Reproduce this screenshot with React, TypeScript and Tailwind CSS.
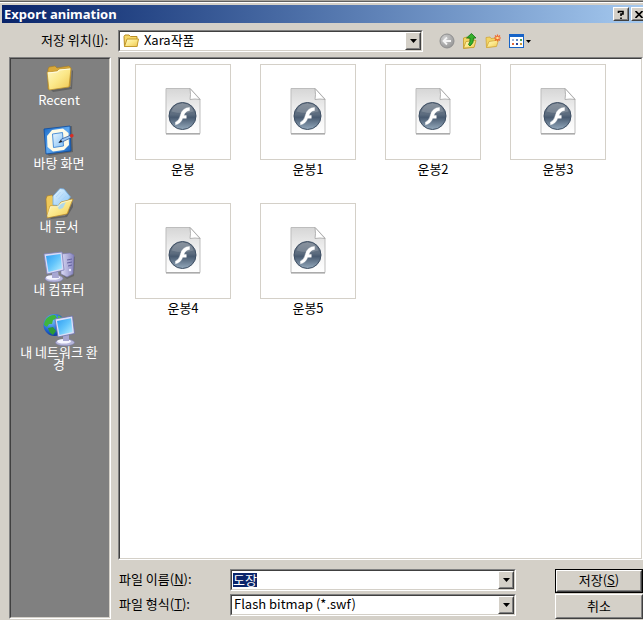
import { useEffect, useRef } from "react";
import type { ReactNode } from "react";

const files = ["운봉", "운봉1", "운봉2", "운봉3", "운봉4", "운봉5"];

const sunken = "border border-t-[#808080] border-l-[#808080] border-b-white border-r-white";
const sunkenInner = "border border-t-[#404040] border-l-[#404040] border-b-[#d4d0c8] border-r-[#d4d0c8]";
const raised = "border border-t-white border-l-white border-b-[#404040] border-r-[#404040]";
const raisedInner = "border border-t-[#d4d0c8] border-l-[#d4d0c8] border-b-[#808080] border-r-[#808080]";

function Gradients() {
    return (
        <svg className="absolute h-0 w-0" aria-hidden="true">
            <defs>
                <linearGradient id="folder" x1="0" y1="0" x2="1" y2="1">
                    <stop offset="0" stopColor="#fff9c8" />
                    <stop offset="0.5" stopColor="#fbe88a" />
                    <stop offset="1" stopColor="#efc550" />
                </linearGradient>
                <linearGradient id="paper" x1="0" y1="0" x2="0" y2="1">
                    <stop offset="0" stopColor="#d6d6d6" />
                    <stop offset="0.5" stopColor="#f1f1f1" />
                    <stop offset="1" stopColor="#ffffff" />
                </linearGradient>
                <linearGradient id="ball" x1="0" y1="0" x2="0" y2="1">
                    <stop offset="0" stopColor="#76818e" />
                    <stop offset="0.45" stopColor="#5b6b7e" />
                    <stop offset="0.55" stopColor="#485a70" />
                    <stop offset="1" stopColor="#94a9bc" />
                </linearGradient>
                <linearGradient id="screen" x1="0" y1="0" x2="1" y2="1">
                    <stop offset="0" stopColor="#2f9df2" />
                    <stop offset="0.5" stopColor="#62c4fb" />
                    <stop offset="1" stopColor="#b9f0ff" />
                </linearGradient>
                <linearGradient id="case" x1="0" y1="0" x2="1" y2="0">
                    <stop offset="0" stopColor="#dcdcf6" />
                    <stop offset="1" stopColor="#8583bd" />
                </linearGradient>
                <linearGradient id="desk" x1="0" y1="0" x2="1" y2="1">
                    <stop offset="0" stopColor="#1767c4" />
                    <stop offset="0.5" stopColor="#5fa8f0" />
                    <stop offset="1" stopColor="#1561bd" />
                </linearGradient>
                <linearGradient id="sheet" x1="0" y1="0" x2="1" y2="1">
                    <stop offset="0" stopColor="#e8f6ff" />
                    <stop offset="1" stopColor="#86c2f5" />
                </linearGradient>
                <radialGradient id="globe" cx="0.35" cy="0.3" r="0.8">
                    <stop offset="0" stopColor="#7cc4ff" />
                    <stop offset="0.6" stopColor="#1f63d0" />
                    <stop offset="1" stopColor="#0b2f86" />
                </radialGradient>
                <radialGradient id="back" cx="0.35" cy="0.3" r="0.8">
                    <stop offset="0" stopColor="#cfcfcf" />
                    <stop offset="1" stopColor="#929292" />
                </radialGradient>
            </defs>
        </svg>
    );
}

function RecentIcon() {
    return (
        <svg viewBox="0 0 32 32" className="h-8 w-8">
            <path d="M8 28 28 25 29 8 30 9 29 27 10 30z" fill="#444" opacity="0.5" />
            <path d="M5 7 6 5 12 4 14 6 26 4 28 6 27 24 5 27z" fill="#d9a93a" stroke="#a87c1e" strokeWidth="0.6" />
            <path d="M4 10 14 9 16 7 28 6 26 25 6 28z" fill="url(#folder)" stroke="#b98c28" strokeWidth="0.7" />
            <path d="M5 11 14.500 10 16.500 8 27 7" fill="none" stroke="#fffbe0" />
        </svg>
    );
}

function DesktopIcon() {
    return (
        <svg viewBox="0 0 32 32" className="h-8 w-8">
            <path d="M4 4 29 1 30 27 6 31 3 28z" fill="#444" opacity="0.5" />
            <path d="M1 4 27 1 28 26 3 29z" fill="url(#desk)" stroke="#0b4ba0" strokeWidth="0.8" />
            <path d="M9 5 20 3.500 25.500 8 26 20 21 25 10 26.500 4.500 22 4 11z" fill="#fdfbe8" />
            <path d="M9.500 9 19.500 7.500 20.500 21 10.500 22.500z" fill="url(#sheet)" stroke="#3d86d2" strokeWidth="0.9" />
            <path d="M16 17.500 18.500 14 27 10.500 28.500 12.500 19.500 16.800z" fill="#9cc6f2" stroke="#1f4f93" strokeWidth="0.7" />
            <path d="M15.500 18 18 14.800 19.200 16.800z" fill="#222" />
            <path d="M26.500 10 29 8.800Q31.200 9.500 30.500 11.500L28 13z" fill="#d92c22" />
        </svg>
    );
}

function DocumentsIcon() {
    return (
        <svg viewBox="0 0 32 32" className="h-8 w-8">
            <path d="M6 29 22 28 30 14 30 19 24 29 8 31z" fill="#444" opacity="0.5" />
            <path d="M3 11 4 8 9 7 11 10 27 9 25 25 4 28z" fill="#eec85a" stroke="#a97b20" strokeWidth="0.6" />
            <path d="M10 8 17 0.500 21 1 27.500 9 20 18 10 17z" fill="url(#sheet)" stroke="#6ea9df" strokeWidth="0.8" />
            <path d="M13 9 17.500 4 M15.500 11 20.500 5.500 M18 13 23 8" stroke="#a9d2f6" strokeWidth="0.8" />
            <path d="M4 30 7 18 15 18 18 14 30 11 24 26z" fill="url(#folder)" stroke="#b98824" strokeWidth="0.7" />
            <path d="M14 17.500 23 14 20 20 16 21.500z" fill="#a8d6f3" opacity="0.9" />
            <path d="M4.500 28.500 7.500 18.700 15.300 18.700 18.300 14.800 29 12" fill="none" stroke="#fff9d0" strokeWidth="0.8" />
        </svg>
    );
}

function ComputerIcon() {
    return (
        <svg viewBox="0 0 32 32" className="h-8 w-8">
            <path d="M19 4 28 3 32 6 31 25 24 28 19 24z" fill="#444" opacity="0.4" />
            <path d="M18 3 27 2 31 4 30 23 24 26 18 23z" fill="url(#case)" stroke="#7775ae" strokeWidth="0.6" />
            <path d="M24 5 24 25" stroke="#b8b7df" strokeWidth="0.8" />
            <path d="M24 9 29 8 M24 12 29 11 M25 15 29 14" stroke="#5c5a98" strokeWidth="0.9" />
            <circle cx="27" cy="19" r="1.200" fill="#e6e6ff" />
            <ellipse cx="11" cy="27.500" rx="9" ry="3.500" fill="#b9b9df" stroke="#8584b4" strokeWidth="0.6" />
            <ellipse cx="10" cy="26.500" rx="7" ry="2.300" fill="#f4f4ff" />
            <path d="M9 20 15 20 16 27 9 27z" fill="#a8a7d2" />
            <path d="M1 3 19 1 21 19 4 23z" fill="#d8dbf6" stroke="#7d80b8" strokeWidth="0.8" />
            <path d="M3 5 17.500 3 19 17.500 5.500 21z" fill="url(#screen)" />
        </svg>
    );
}

function NetworkIcon() {
    return (
        <svg viewBox="0 0 32 32" className="h-8 w-8">
            <circle cx="11.500" cy="11" r="11" fill="url(#globe)" />
            <path d="M3 5Q7 0.500 12 1L14 4 10 6 9 10 6 10 4 13 1 11Q1 8 3 5z" fill="#3fb53c" />
            <path d="M5 14 10 13 13 17 10 21Q6 19 5 14z" fill="#2c9a35" />
            <path d="M15 1.500Q20 3 21.500 7L17 8 15 5z" fill="#55c144" />
            <ellipse cx="22" cy="28.500" rx="9.500" ry="3.300" fill="#b6b6da" stroke="#8281b2" strokeWidth="0.6" />
            <ellipse cx="21" cy="27.300" rx="7" ry="2.300" fill="#f6f6ff" />
            <path d="M20 20 26 20 26 27 20 27z" fill="#a7a6d0" />
            <path d="M12 5 29.500 2 31.500 19.500 15 23z" fill="#dce0f8" stroke="#6c70ab" strokeWidth="0.8" />
            <path d="M14 7 28 4.300 29.500 18 16.500 21z" fill="url(#screen)" />
        </svg>
    );
}

function SmallFolderIcon() {
    return (
        <svg viewBox="0 0 16 16" className="h-4 w-4 shrink-0">
            <path d="M1 3.500 2 2 6 2 7.500 3.500 14 3.500 14 13.500 1.500 13.500z" fill="#f7d767" stroke="#b88c24" />
            <path d="M1.500 13.500 4 6 15.500 6 14 13.500z" fill="url(#folder)" stroke="#c39a2e" />
        </svg>
    );
}

function BackIcon() {
    return (
        <svg viewBox="0 0 16 16" className="h-4 w-4">
            <circle cx="8" cy="8" r="7" fill="url(#back)" stroke="#8f8f8f" />
            <path d="M12 8H5 M8 4.500 4.500 8 8 11.500" fill="none" stroke="#f4f4f4" strokeWidth="1.800" />
        </svg>
    );
}

function UpIcon() {
    return (
        <svg viewBox="0 0 16 16" className="h-4 w-4">
            <path d="M1.500 5 5 4 6 5.500 12 5 12 14 1.500 15.500z" fill="#f3d563" stroke="#c39a2a" strokeWidth="0.8" />
            <path d="M1.500 15 4 8.500 14 7.500 12 14.500z" fill="url(#folder)" stroke="#c39a2a" strokeWidth="0.8" />
            <path d="M4.500 5 9.500 0.500 14 5 11.500 5Q12 10 8 13L6.500 11.500Q8.500 9 8 5z" fill="#35b02c" stroke="#137216" strokeWidth="0.8" />
        </svg>
    );
}

function NewFolderIcon() {
    return (
        <svg viewBox="0 0 16 16" className="h-4 w-4">
            <path d="M1 4.500 5 4 6 5.500 11 5 11 13 1.500 14.500z" fill="#f3d563" stroke="#d0a63a" strokeWidth="0.8" />
            <path d="M1.500 14.500 4 8.500 13.500 7 11.500 13.500z" fill="url(#folder)" stroke="#d0a63a" strokeWidth="0.8" />
            <path d="M12.500 1.500V8.500 M9 5H16 M10 2.500 15 7.500 M15 2.500 10 7.500" stroke="#f0662a" strokeWidth="1.200" />
            <circle cx="12.500" cy="5" r="1.300" fill="#ffe08a" />
        </svg>
    );
}

function ViewIcon() {
    return (
        <svg viewBox="0 0 24 16" className="h-4 w-6">
            <rect x="1.500" y="1.500" width="14" height="13" fill="#fff" stroke="#1663c7" />
            <rect x="1" y="1" width="15" height="3" fill="#1663c7" />
            <path d="M4 6h2v2h-2z" fill="#9fb4d8" />
            <path d="M8 6h2v2h-2z" fill="#5f87c0" />
            <path d="M12 6h2v2h-2z" fill="#4d9c55" />
            <path d="M4 10h2v2h-2z" fill="#e2693a" />
            <path d="M8 10h2v2h-2z" fill="#27459c" />
            <path d="M12 10h2v2h-2z" fill="#c9973a" />
            <path d="M18 7h5l-2.500 3z" fill="#000" />
        </svg>
    );
}

function FlashFileIcon() {
    return (
        <svg viewBox="0 0 36 48" className="h-12 w-9">
            <path d="M1 1.500H25L35 12V46.500H1z" fill="url(#paper)" stroke="#bdbdbd" />
            <path d="M1 47H35" stroke="#989898" />
            <path d="M25 1.500Q26 8 25 12.500Q30 11.500 35 12.500z" fill="#fff" stroke="#a3a3a3" strokeWidth="0.8" />
            <circle cx="17.500" cy="29" r="13.500" fill="url(#ball)" stroke="#3c4d62" />
            <path d="M6.500 24.500Q8.500 17 17.500 16.500Q26.500 17 28.500 24.500Q17.500 27.500 6.500 24.500z" fill="#fff" opacity="0.15" />
            <path d="M24.500 20.500Q17.500 20.500 15.500 28Q14 34 10.500 35V37.800Q15.500 37 17.800 31.300H21.300V28.500H18.800Q20.500 23.800 24.500 23.500z" fill="#fff" stroke="#fff" strokeWidth="0.4" />
        </svg>
    );
}

function DropArrow() {
    return (
        <span className={`pointer-events-none flex w-4 shrink-0 bg-[#d4d0c8] ${raised}`}>
            <span className={`flex flex-1 items-center justify-center ${raisedInner}`}>
                <svg viewBox="0 0 7 4" className="h-1 w-[7px]">
                    <path d="M0 0H7L3.500 4z" fill="#000" />
                </svg>
            </span>
        </span>
    );
}

function Combo({ children, className }: { children: ReactNode; className: string }) {
    return (
        <div className={`${sunken} ${className}`}>
            <div className={`flex h-full bg-white ${sunkenInner}`}>
                {children}
                <DropArrow />
            </div>
        </div>
    );
}

function Place({ icon, label }: { icon: ReactNode; label: string }) {
    return (
        <button type="button" className="flex w-full flex-col items-center pr-[10px] pl-2 leading-3 text-white">
            {icon}
            <span>{label}</span>
        </button>
    );
}

function TitleButton({ label, children }: { label: string; children: ReactNode }) {
    return (
        <button type="button" aria-label={label} className={`h-[14px] w-4 shrink-0 bg-[#d4d0c8] ${raised}`}>
            <span className={`flex h-full items-center justify-center ${raisedInner}`}>{children}</span>
        </button>
    );
}

function App() {
    const nameRef = useRef<HTMLInputElement>(null);

    useEffect(() => {
        nameRef.current?.focus();
        nameRef.current?.select();
    }, []);

    return (
        <div className="flex min-h-screen flex-col overflow-hidden bg-[#d4d0c8] font-['Noto_Sans_CJK_KR',sans-serif] text-[13px] leading-4 text-black">
            <Gradients />
            <div className="h-[2px] border-b border-[#606060] bg-[#a8a49c]" />
            <div className="h-[3px] border-t border-white" />
            <header className="-mr-1 ml-[2px] flex h-[18px] items-center bg-linear-to-r from-[#0a246a] to-[#a6caf0] pl-[2px]">
                <h1 className="flex-1 pb-px font-['Noto_Sans',sans-serif] text-[13px] font-bold text-white">Export animation</h1>
                <div className="flex gap-[2px]">
                    <TitleButton label="도움말">
                        <svg viewBox="0 0 8 9" className="h-[9px] w-2">
                            <path d="M1.500 3V1.500H6V4H4V6 M4 7.500V9" fill="none" stroke="#000" strokeWidth="1.600" />
                        </svg>
                    </TitleButton>
                    <TitleButton label="닫기">
                        <svg viewBox="0 0 8 7" className="h-[7px] w-2">
                            <path d="M0.500 0 7.500 7 M7.500 0 0.500 7" stroke="#000" strokeWidth="1.700" />
                        </svg>
                    </TitleButton>
                </div>
            </header>

            <div className="flex items-center pt-[7px] pb-[5px]">
                <label htmlFor="place" className="w-[118px] shrink-0 pr-[10px] pb-[2px] text-right">
                    저장 위치(<u>I</u>):
                </label>
                <Combo className="h-[22px] w-[305px]">
                    <span className="flex items-center pl-[3px]">
                        <SmallFolderIcon />
                    </span>
                    <select id="place" className="min-w-0 flex-1 appearance-none bg-transparent pb-[2px] pl-[5px] outline-none">
                        <option>Xara작품</option>
                    </select>
                </Combo>
                <div className="flex gap-[7px] pb-px pl-4">
                    <button type="button" aria-label="뒤로"><BackIcon /></button>
                    <button type="button" aria-label="상위 폴더"><UpIcon /></button>
                    <button type="button" aria-label="새 폴더"><NewFolderIcon /></button>
                    <button type="button" aria-label="보기"><ViewIcon /></button>
                </div>
            </div>

            <div className="flex flex-1 pb-px">
                <nav className={`ml-[9px] w-[102px] shrink-0 ${sunken}`}>
                    <div className={`flex h-full flex-col gap-[19px] bg-[#808080] pt-[3px] ${sunkenInner}`}>
                        <Place icon={<RecentIcon />} label="Recent" />
                        <Place icon={<DesktopIcon />} label="바탕 화면" />
                        <Place icon={<DocumentsIcon />} label="내 문서" />
                        <Place icon={<ComputerIcon />} label="내 컴퓨터" />
                        <Place icon={<NetworkIcon />} label="내 네트워크 환경" />
                    </div>
                </nav>

                <main className="ml-[7px] flex flex-1 flex-col">
                    <div className={`flex flex-1 ${sunken}`}>
                        <ul className={`flex flex-1 flex-wrap content-start gap-x-[29px] gap-y-[26px] bg-white pt-[5px] pl-[15px] ${sunkenInner}`}>
                            {files.map((name) => (
                                <li key={name} className="w-24 text-center">
                                    <div className="flex h-24 items-center justify-center border border-[#d4d0c8] pb-[2px]">
                                        <FlashFileIcon />
                                    </div>
                                    <p className="pt-px">{name}</p>
                                </li>
                            ))}
                        </ul>
                    </div>

                    <form className="flex justify-between pt-[9px]" onSubmit={(e) => e.preventDefault()}>
                        <div className="flex flex-col gap-[3px]">
                            <div className="flex items-center">
                                <label htmlFor="filename" className="w-28 pb-[2px] pl-px">파일 이름(<u>N</u>):</label>
                                <Combo className="h-[22px] w-[286px]">
                                    <input
                                        id="filename"
                                        ref={nameRef}
                                        defaultValue="도장"
                                        className="my-[2px] h-[14px] min-w-0 flex-1 bg-transparent pl-px leading-[14px] outline-none selection:bg-[#0a246a] selection:text-white"
                                    />
                                </Combo>
                            </div>
                            <div className="flex items-center">
                                <label htmlFor="filetype" className="w-28 pb-[2px] pl-px">파일 형식(<u>T</u>):</label>
                                <Combo className="h-[22px] w-[286px]">
                                    <select id="filetype" className="min-w-0 flex-1 appearance-none bg-transparent pb-[2px] pl-[2px] outline-none">
                                        <option>Flash bitmap (*.swf)</option>
                                    </select>
                                </Combo>
                            </div>
                        </div>
                        <div className="flex w-[88px] flex-col gap-px">
                            <button type="submit" className="h-6 border border-black">
                                <span className={`flex h-full ${raised}`}>
                                    <span className={`flex flex-1 items-center justify-center pb-[2px] ${raisedInner}`}>
                                        <span>저장(<u>S</u>)</span>
                                    </span>
                                </span>
                            </button>
                            <button type="button" className={`h-[25px] ${raised}`}>
                                <span className={`flex h-full items-center justify-center pb-[2px] ${raisedInner}`}>취소</span>
                            </button>
                        </div>
                    </form>
                </main>
            </div>
        </div>
    );
}

export default App;
